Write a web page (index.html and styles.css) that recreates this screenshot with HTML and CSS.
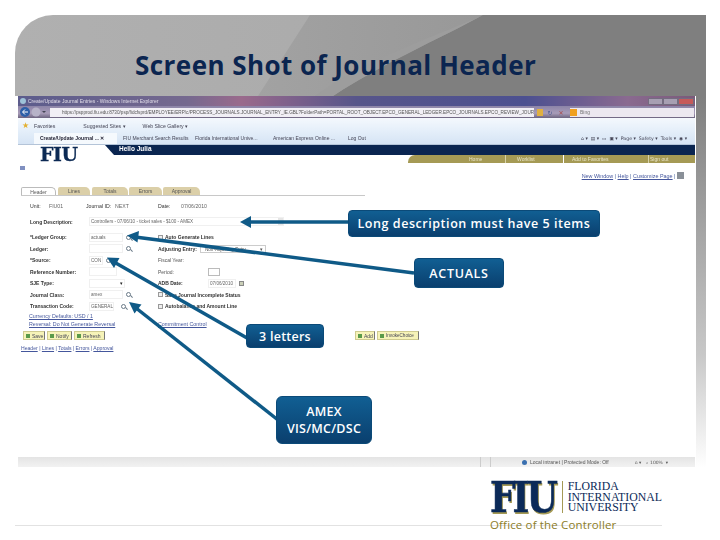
FILE: index.html
```html
<!DOCTYPE html>
<html lang="en">
<head>
<meta charset="utf-8">
<title>Screen Shot of Journal Header</title>
<link rel="stylesheet" href="styles.css">
</head>
<body>
<div class="slide">
  <header class="head">
    <svg class="swoosh" viewBox="0 0 691 81" preserveAspectRatio="none" aria-hidden="true">
      <defs>
        <linearGradient id="mid" x1="0" y1="0" x2="1" y2="0"><stop offset="0" stop-color="#a2a2a2"/><stop offset="1" stop-color="#8e8e8e"/></linearGradient>
      </defs>
      <path d="M295 0 L243 81 L691 81 L691 0Z" fill="url(#mid)"/>
      <path d="M468 0 C420 26 372 46 318 81 L691 81 L691 0Z" fill="#7f7f7f"/>
      <path d="M468 0 C420 22 350 44 300 81 L318 81 C372 46 420 26 468 0Z" fill="#9d9d9d"/>
    </svg>
    <h1 class="title">Screen Shot of Journal Header</h1>
  </header>

  <div class="stage">
    <div class="window">
      <div class="titlebar">
        <span class="ie"></span><span>Create/Update Journal Entries - Windows Internet Explorer</span>
        <span class="winbtns"><i></i><i></i><i class="close"></i></span>
      </div>
      <div class="addressbar">
        <svg class="navbtns" width="28" height="12" viewBox="0 0 28 12" aria-hidden="true">
          <circle cx="6" cy="6" r="5" fill="#2d5fa8"/><path d="M9 6H4M6 3.500 3.500 6 6 8.500" stroke="#fff" fill="none"/>
          <circle cx="17" cy="6" r="4.500" fill="#b7b3c8"/><path d="M23 5l2 2 2-2" fill="#445"/>
        </svg>
        <div class="url">https://pspprod.fiu.edu:8730/psp/fidcfsprd/EMPLOYEE/ERP/c/PROCESS_JOURNALS.JOURNAL_ENTRY_IE.GBL?FolderPath=PORTAL_ROOT_OBJECT.EPCO_GENERAL_LEDGER.EPCO_JOURNALS.EPCO_REVIEW_JOUR</div>
        <span class="lock"></span>
        <span class="urlbtn">↻</span>
        <span class="urlbtn stop">✕</span>
        <div class="search"><span class="bing"></span>Bing</div>
      </div>
      <div class="favbar">
        <span class="star">★</span><span>Favorites</span><span class="fav f1">Suggested Sites ▾</span><span class="fav">Web Slice Gallery ▾</span>
      </div>
      <div class="tabbar">
        <span class="tab on t1">Create/Update Journal ... ✕</span>
        <span class="tab t2">FIU Merchant Search Results</span>
        <span class="tab t3">Florida International Unive...</span>
        <span class="tab t4">American Express Online ...</span>
        <span class="tab t5">Log Out</span>
        <span class="tools">⌂ ▾ &nbsp;▤ ▾ &nbsp;▭ &nbsp;▣ ▾ &nbsp;Page ▾ &nbsp;Safety ▾ &nbsp;Tools ▾ &nbsp;◉ ▾</span>
      </div>

      <div class="page">
        <div class="brand">
          <div class="fiu">FIU</div>
          <div class="bands">
            <div class="blue">Hello Julia</div>
            <nav class="gold"><span>Home</span><span>Worklist</span><span>Add to Favorites</span><span>Sign out</span></nav>
          </div>
        </div>
        <div class="sublinks"><a>New Window</a> | <a>Help</a> | <a>Customize Page</a> | <span class="printer"></span></div>
        <span class="mini"></span>

        <div class="ptabs">
          <span class="ptab on">Header</span><span class="ptab p2">Lines</span><span class="ptab p3">Totals</span><span class="ptab p4">Errors</span><span class="ptab p5">Approval</span>
        </div>

        <div class="unit">
          <b>Unit:</b><span>FIU01</span><b>Journal ID:</b><span>NEXT</span><b>Date:</b><span>07/06/2010</span>
        </div>

        <div class="form">
          <b>Long Description:</b><div class="field long">Controllers - 07/06/10 - ticket sales - $100 - AMEX</div>

          <b>*Ledger Group:</b><div class="cell"><span class="field w34">actuals</span><span class="mag"></span></div>
          <div class="check"><i></i><b>Auto Generate Lines</b></div>

          <b>Ledger:</b><div class="cell"><span class="field w34"></span><span class="mag"></span></div>
          <div class="adj"><b>Adjusting Entry:</b><span class="select"><span>Non-Adjusting Entry</span><span>▾</span></span></div>

          <b>*Source:</b><div class="cell"><span class="field w14">CON</span><span class="mag"></span></div>
          <div class="second"><span>Fiscal Year:</span></div>

          <b>Reference Number:</b><div class="cell"><span class="field w28"></span></div>
          <div class="second"><span class="lab50">Period:</span><span class="field w12 box"></span></div>

          <b>SJE Type:</b><div class="cell"><span class="field w36 dd">▾</span></div>
          <div class="second"><b class="lab50">ADB Date:</b><span class="field date">07/06/2010</span><span class="cal"></span></div>

          <b>Journal Class:</b><div class="cell"><span class="field w34">amex</span><span class="mag"></span></div>
          <div class="check"><i></i><b>Save Journal Incomplete Status</b></div>

          <b>Transaction Code:</b><div class="cell"><span class="field w25">GENERAL</span><span class="mag m2"></span></div>
          <div class="check"><i></i><b>Autobalance and Amount Line</b></div>
        </div>

        <div class="links">
          <a>Currency Defaults: USD / 1</a>
          <div class="links-row"><a>Reversal: Do Not Generate Reversal</a><a>Commitment Control</a></div>
        </div>

        <div class="actions">
          <span class="btn b1"><i class="g"></i>Save</span><span class="btn b2"><i class="g"></i>Notify</span><span class="btn b3"><i class="g"></i>Refresh</span>
          <span class="btn add"><i class="g"></i>Add</span><span class="btn b5"><i class="g"></i>InvokeChoice</span>
        </div>
        <div class="crumbs"><a>Header</a> | <a>Lines</a> | <a>Totals</a> | <a>Errors</a> | <a>Approval</a></div>
      </div>

      <div class="status">
        <span class="globe"></span><span>Local intranet | Protected Mode: Off</span><span class="zoom">⌂ ▾ &nbsp;&nbsp;⌕ 100% &nbsp;▾</span>
      </div>
    </div>
  </div>

  <footer class="foot">
    <div class="logo">
      <span class="mark">FIU</span>
      <span class="name">FLORIDA<br>INTERNATIONAL<br>UNIVERSITY</span>
    </div>
    <div class="office">Office of the Controller</div>
  </footer>

  <svg class="arrows" width="720" height="540" viewBox="0 0 720 540" aria-hidden="true">
    <g fill="#0f5a87" stroke="#0f5a87">
      <path d="M349 222H248" stroke-width="3.500"/><path d="M240 222l11-6v12z" stroke="none"/>
      <path d="M414 273 135 237" stroke-width="3.500"/><path d="M127 235.500l12-4.500-1.500 11.500z" stroke="none"/>
      <path d="M247 338 114 262" stroke-width="3.500"/><path d="M107 257.500l12.500 0.500-5.500 10z" stroke="none"/>
      <path d="M278 420 136 308" stroke-width="3.500"/><path d="M129 302l12.500 2.500-7 9z" stroke="none"/>
    </g>
  </svg>
  <div class="callout c1">Long description must have 5 items</div>
  <div class="callout c2">ACTUALS</div>
  <div class="callout c3">3 letters</div>
  <div class="callout c4">AMEX<br>VIS/MC/DSC</div>
</div>
</body>
</html>
```
FILE: styles.css
```css
* { box-sizing: border-box; }
html, body { margin: 0; padding: 0; background: #fff; }
.slide { position: relative; width: 720px; height: 540px; overflow: hidden; font-family: "Liberation Sans", Arial, sans-serif; }

.head { position: relative; height: 81px; margin: 15px 14px 0 15px; background: linear-gradient(90deg, #b0b0b0, #a6a6a6); border-top-left-radius: 38px; overflow: hidden; }
.swoosh { position: absolute; inset: 0; width: 100%; height: 100%; }
.title { position: relative; margin: 0; padding: 33px 0 0 120px; font: 700 26px/34px "Open Sans", sans-serif; letter-spacing: 0.45px; color: #0b2550; white-space: nowrap; }

.stage { height: 371px; margin: 0 14px 0 15px; padding: 0 11px 0 3px; background: linear-gradient(#7f7f7f, #c8c8c8 70%, #fff) right top / 10px 100% no-repeat; }

.window { display: flex; flex-direction: column; height: 371px; background: #fff; color: #333; filter: blur(0.35px); overflow: hidden; }

.titlebar { display: flex; align-items: center; gap: 2px; height: 10px; padding-left: 2px; color: #e0dce8; font-size: 5px; background: linear-gradient(90deg, #5c5c8c, #75698f 25%, #9a6a8c 33%, #57558a 50%, #4c5090 75%, #8a6a90 90%, #7a5a7a); }
.ie { width: 6px; height: 6px; border-radius: 50%; background: #9ec2d8; }
.winbtns { display: flex; margin-left: auto; margin-right: 1px; }
.winbtns i { width: 15px; height: 7px; background: #a79fb2; border: 1px solid #746c80; }
.winbtns i.close { width: 16px; background: #c65a5a; }

.addressbar { display: flex; align-items: center; height: 12px; padding: 0 1px; gap: 3px; background: linear-gradient(#8c84a8, #a89cb8 60%, #6c6480); }
.navbtns { flex: none; }
.url { flex: 1; height: 9px; min-width: 0; padding-left: 12px; white-space: nowrap; font-size: 4.650px; line-height: 9px; color: #555; background: #f1eff5; }
.lock { width: 6px; height: 7px; flex: none; background: #e0b040; }
.urlbtn { flex: none; width: 8px; font: 6px/9px "DejaVu Sans", sans-serif; text-align: center; color: #4a5a90; }
.stop { margin-right: 2px; color: #a84a4a; }
.search { display: flex; align-items: center; gap: 3px; width: 124px; height: 9px; color: #777; background: #ece8f0; font-size: 5px; flex: none; }
.bing { width: 7px; height: 7px; background: #f0a020; }

.favbar { display: flex; align-items: center; gap: 3px; height: 15px; padding-left: 4px; font-size: 5.200px; color: #445; background: linear-gradient(#f4f8fd, #e2edf9); }
.star { width: 9px; color: #e4b030; font-size: 8px; }
.fav.f1 { margin-left: 25px; }
.fav { margin-left: 14px; white-space: nowrap; }

.tabbar { display: flex; align-items: flex-end; height: 12px; padding-left: 16px; font-size: 5px; color: #445; background: linear-gradient(#e2edf9, #d6e4f4); border-bottom: 1px solid #b4c4d8; }
.tab { height: 11px; padding: 2px 0 0 6px; white-space: nowrap; }
.t1 { width: 83px; }
.t2 { width: 72px; }
.t3 { width: 78px; }
.t4 { width: 75px; }
.t5 { width: 40px; }
.tab.on { background: #f5f9fd; color: #223; font-weight: 700; }
.tools { margin-left: auto; padding: 0 8px 3px 0; white-space: nowrap; font-family: "DejaVu Sans", sans-serif; font-size: 4.700px; }

.page { display: flex; flex-direction: column; position: relative; flex: 1; min-height: 0; }
.brand { display: flex; height: 18px; flex: none; }
.fiu { width: 87px; padding-left: 22px; font: 700 19px/18px "DejaVu Serif", serif; letter-spacing: -0.5px; color: #0c2a54; -webkit-text-stroke: 0.3px #0c2a54; }
.bands { flex: 1; min-width: 0; }
.blue { height: 10px; padding-left: 14px; font: 700 6.500px/8px "Liberation Sans", sans-serif; color: #fff; background: #0a2550; clip-path: polygon(0 0, 100% 0, 100% 100%, 9px 100%); }
.gold { display: grid; grid-template-columns: 48px 55px 78px 1fr; height: 8px; margin-left: 303px; padding-left: 61px; border-radius: 7px 0 0 0; color: #e8e4c8; font-size: 5px; line-height: 8px; background: linear-gradient(#d8d2a8, #d8d2a8) 97px 0 / 1px 100% no-repeat, linear-gradient(#fff, #fff) 155px 0 / 1px 100% no-repeat, linear-gradient(#d8d2a8, #d8d2a8) 240px 0 / 1px 100% no-repeat, #a59a55; }
.gold span { white-space: nowrap; }

.sublinks { align-self: flex-end; margin: 9px 11px 0 0; font-size: 5.400px; line-height: 7px; color: #44609c; white-space: nowrap; }
.sublinks a, .links a, .crumbs a { color: #44569c; text-decoration: underline; }
.printer { display: inline-block; width: 7px; height: 7px; background: #8a9098; vertical-align: -1px; }
.mini { position: absolute; left: 2px; top: 21px; width: 5px; height: 4px; background: #8090c0; }

.ptabs { display: flex; margin: 7px 0 0 3px; width: 344px; height: 9px; border-bottom: 1px solid #c8c8c8; flex: none; }
.ptab { width: 32px; margin-left: 2px; padding-top: 1px; text-align: center; font-size: 5px; color: #555; background: #dbcfa8; border-radius: 2px 5px 0 0; }
.ptab.on { width: 35px; margin-left: 0; background: #fff; border: 1px solid #bbb; border-bottom: 0; }
.p3 { width: 36px; }
.p4 { width: 33px; margin-left: 1px; }
.p5 { width: 37px; margin-left: 1px; }

.unit { display: grid; grid-template-columns: 19px 37px 29px 43px 23px 1fr; margin: 7px 0 0 12px; font-size: 5.200px; line-height: 7px; color: #666; flex: none; }
.unit b { color: #333; font-weight: 400; white-space: nowrap; }

.form { display: grid; grid-template-columns: 59px 69px 1fr; grid-template-rows: 19.600px; grid-auto-rows: 11.500px; align-items: center; margin: 2px 0 0 12px; font-size: 5px; flex: none; }
.form > b { white-space: nowrap; color: #333; }
.form > .long { position: relative; grid-column: 2 / 4; width: 195px; }
.long::after { content: ""; position: absolute; right: 0; top: 0; width: 5px; height: 100%; background: #e6e6e6; }
.field { display: block; height: 9px; padding-left: 1px; font-size: 4.600px; line-height: 8px; color: #666; border: 1px solid #f0f0f0; background: #fff; white-space: nowrap; overflow: hidden; }
.cell { display: flex; align-items: center; gap: 2px; }
.w34 { width: 34px; } .w14 { width: 14px; } .w28 { width: 28px; } .w36 { width: 36px; } .w25 { width: 25px; } .w12 { width: 12px; }
.dd { text-align: right; color: #222; padding-right: 1px; }
.box { height: 8px; border-color: #bbb; }
.date { width: 28px; }
.mag { position: relative; width: 5px; height: 5px; margin-left: 1px; border: 1px solid #6a7a88; border-radius: 50%; }
.mag::after { content: ""; position: absolute; left: 3px; top: 3px; width: 3px; height: 1px; background: #6a7a88; transform: rotate(45deg); }
.m2 { margin-left: 5px; }
.check { display: flex; align-items: center; gap: 2px; }
.check i { width: 5px; height: 5px; border: 1px solid #999; background: #eee; }
.check b, .adj b, .second b { color: #333; }
.adj { display: flex; align-items: center; }
.adj b { width: 42px; white-space: nowrap; }
.select { display: flex; justify-content: space-between; width: 66px; padding: 0 2px 0 4px; height: 8px; line-height: 7px; font-size: 4.600px; border: 1px solid #ccc; white-space: nowrap; overflow: hidden; color: #555; }
.second { display: flex; align-items: center; color: #555; }
.lab50 { width: 50px; }
.cal { width: 5px; height: 5px; margin-left: 3px; background: #cbd0b8; border: 1px solid #888; }

.links { margin: 0 0 0 11px; font-size: 5.300px; line-height: 8px; flex: none; }
.links a { display: block; white-space: nowrap; }
.links-row { display: grid; grid-template-columns: 129px 1fr; }

.actions { display: flex; gap: 2px; margin: 3px 0 0 5px; flex: none; }
.btn { display: flex; align-items: center; gap: 2px; height: 9px; padding: 0 1px 0 2px; font-size: 5px; color: #445; background: #f6f3b8; border: 1px solid #cfcb90; border-right-color: #777; white-space: nowrap; overflow: hidden; }
.btn .g { width: 4px; height: 4px; flex: none; background: #5a9a4a; }
.b1 { width: 22px; }
.b2 { width: 25px; }
.b3 { width: 31px; }
.add { width: 20px; margin-left: 248px; }
.b5 { width: 42px; font-size: 4.600px; }
.crumbs { margin: 5px 0 0 3px; font-size: 5.100px; line-height: 7px; color: #44569c; flex: none; }

.status { display: flex; align-items: center; height: 10px; flex: none; padding-left: 504px; font-size: 5px; color: #555; background: linear-gradient(#ccc, #ccc) 462px 0 / 1px 100% no-repeat, linear-gradient(#ccc, #ccc) 472px 0 / 1px 100% no-repeat, linear-gradient(#e4e4e4, #f2f2f2); }
.globe { width: 5px; height: 5px; margin-right: 3px; border-radius: 50%; background: #3a70b0; }
.zoom { margin-left: 26px; white-space: nowrap; font-family: "DejaVu Sans", sans-serif; font-size: 4.500px; }

.foot { position: relative; margin-left: 15px; width: 647px; height: 73px; padding: 14px 0 0 475px; background: linear-gradient(#e2e2e2, #e2e2e2) 0 58px / 100% 1px no-repeat; }
.logo { display: flex; align-items: center; height: 32px; }
.mark { display: inline-block; width: 66px; font: 700 36px/32px "DejaVu Serif", serif; letter-spacing: -3px; color: #0b2a58; text-shadow: 1px 1px 0 #a59a55; -webkit-text-stroke: 0.5px #0b2a58; transform: scaleY(1.180); white-space: nowrap; }
.name { margin-left: 6px; padding-left: 5px; border-left: 1px solid #a59a55; font: 400 11.800px/10.600px "Liberation Serif", serif; color: #0b2a58; white-space: nowrap; }
.office { position: absolute; left: 475px; top: 50px; font: 400 11.500px/16px "Open Sans", sans-serif; letter-spacing: 0.150px; color: #8c7d28; white-space: nowrap; }

.arrows { position: absolute; left: 0; top: 0; pointer-events: none; }
.callout { position: absolute; display: flex; align-items: center; justify-content: center; text-align: center; color: #fff; font: 600 12.500px/17px "Open Sans", sans-serif; letter-spacing: 0.25px; background: linear-gradient(#115f93, #0a3f6e); border-radius: 4px; border: 1px solid #0b4a78; }
.c1 { left: 348px; top: 210px; width: 252px; height: 27px; letter-spacing: 0.550px; }
.c2 { left: 414px; top: 258px; width: 90px; height: 30px; letter-spacing: 0.700px; }
.c3 { left: 246px; top: 324px; width: 78px; height: 24px; }
.c4 { left: 276px; top: 396px; width: 96px; height: 48px; border-radius: 6px; }
```
